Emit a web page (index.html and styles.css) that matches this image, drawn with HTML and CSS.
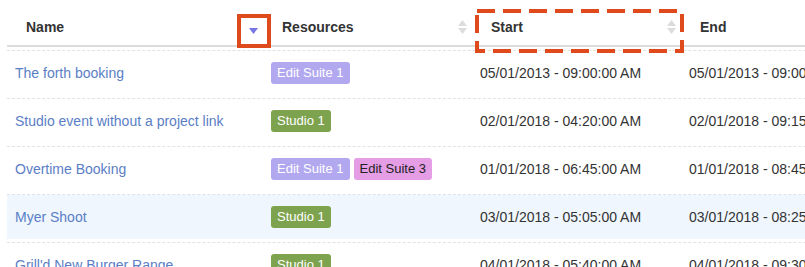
FILE: index.html
```html
<!DOCTYPE html>
<html>
<head>
<meta charset="utf-8">
<link rel="stylesheet" href="styles.css">
</head>
<body>
<div class="table">
  <div class="head">
    <div class="th">
      <span>Name</span>
      <span class="sort hl">
        <svg width="9" height="15" viewBox="0 0 9 15"><polygon points="0,8 9,8 4.5,14" fill="#7676e4"/></svg>
      </span>
    </div>
    <div class="th">
      <span>Resources</span>
      <span class="sort">
        <svg width="9" height="15" viewBox="0 0 9 15"><polygon points="4.5,0 9,6 0,6" fill="#dcdcdc"/><polygon points="0,8 9,8 4.5,14" fill="#dcdcdc"/></svg>
      </span>
    </div>
    <div class="th start">
      <span>Start</span>
      <span class="sort">
        <svg width="9" height="15" viewBox="0 0 9 15"><polygon points="4.5,0 9,6 0,6" fill="#dcdcdc"/><polygon points="0,8 9,8 4.5,14" fill="#dcdcdc"/></svg>
      </span>
      <svg class="dashbox" width="209" height="44" viewBox="0 0 209 44"><rect x="2" y="2" width="205" height="40" fill="none" stroke="#df4a1c" stroke-width="4" stroke-dasharray="18 8"/></svg>
    </div>
    <div class="th">
      <span>End</span>
    </div>
  </div>

  <div class="row">
    <div class="td"><a class="link">The forth booking</a></div>
    <div class="td"><span class="badge edit1">Edit Suite 1</span></div>
    <div class="td">05/01/2013 - 09:00:00 AM</div>
    <div class="td">05/01/2013 - 09:00:00 AM</div>
  </div>
  <div class="row">
    <div class="td"><a class="link">Studio event without a project link</a></div>
    <div class="td"><span class="badge studio">Studio 1</span></div>
    <div class="td">02/01/2018 - 04:20:00 AM</div>
    <div class="td">02/01/2018 - 09:15:00 AM</div>
  </div>
  <div class="row">
    <div class="td"><a class="link">Overtime Booking</a></div>
    <div class="td"><span class="badge edit1">Edit Suite 1</span><span class="badge edit3">Edit Suite 3</span></div>
    <div class="td">01/01/2018 - 06:45:00 AM</div>
    <div class="td">01/01/2018 - 08:45:00 AM</div>
  </div>
  <div class="row hover">
    <div class="td"><a class="link">Myer Shoot</a></div>
    <div class="td"><span class="badge studio">Studio 1</span></div>
    <div class="td">03/01/2018 - 05:05:00 AM</div>
    <div class="td">03/01/2018 - 08:25:00 AM</div>
  </div>
  <div class="row">
    <div class="td"><a class="link">Grill'd New Burger Range</a></div>
    <div class="td"><span class="badge studio">Studio 1</span></div>
    <div class="td">04/01/2018 - 05:40:00 AM</div>
    <div class="td">04/01/2018 - 09:30:00 AM</div>
  </div>
</div>
</body>
</html>
```

FILE: styles.css
```css
html, body {
  margin: 0;
  padding: 0;
  background: #fff;
  overflow: hidden;
}
body {
  font-family: "Liberation Sans", Arial, Helvetica, sans-serif;
  font-size: 14px;
  color: #333;
  width: 805px;
  height: 267px;
}
.table {
  margin-left: 7px;
  width: 1100px;
}
.head {
  display: grid;
  grid-template-columns: 256px 209px 209px 209px;
  height: 45px;
  border-bottom: 2px solid #dcdcdc;
}
.th {
  position: relative;
  display: flex;
  align-items: center;
  justify-content: space-between;
  padding: 17px 5px 8px 19px;
  line-height: 20px;
  font-weight: bold;
  color: #333;
}
.sort {
  position: relative;
  display: flex;
  width: 9px;
  height: 15px;
}
.sort svg {
  display: block;
}
.hl::after {
  content: "";
  position: absolute;
  left: -12.5px;
  top: -6px;
  width: 26px;
  height: 26px;
  border: 4px solid #df4a1c;
}
.dashbox {
  position: absolute;
  left: 3px;
  top: 9px;
}
.row {
  display: grid;
  grid-template-columns: 256px 209px 209px 209px;
  margin-top: 3px;
  height: 44px;
  border-top: 1px dashed #e2e2e2;
  align-items: center;
  background-clip: padding-box;
}
.row.hover {
  background-color: #eff6fe;
}
.td {
  display: flex;
  align-items: center;
  padding-left: 8px;
  white-space: nowrap;
  line-height: 20px;
}
.link {
  color: #5a7ec6;
  text-decoration: none;
}
.badge {
  display: inline-block;
  height: 22px;
  line-height: 22px;
  padding: 0 6px;
  border-radius: 3px;
  font-size: 13px;
  margin-right: 4px;
}
.edit1 {
  background: #b2a8f0;
  color: #fff;
}
.studio {
  background: #7ea34f;
  color: #fff;
}
.edit3 {
  background: #e59de6;
  color: #222;
}
```
